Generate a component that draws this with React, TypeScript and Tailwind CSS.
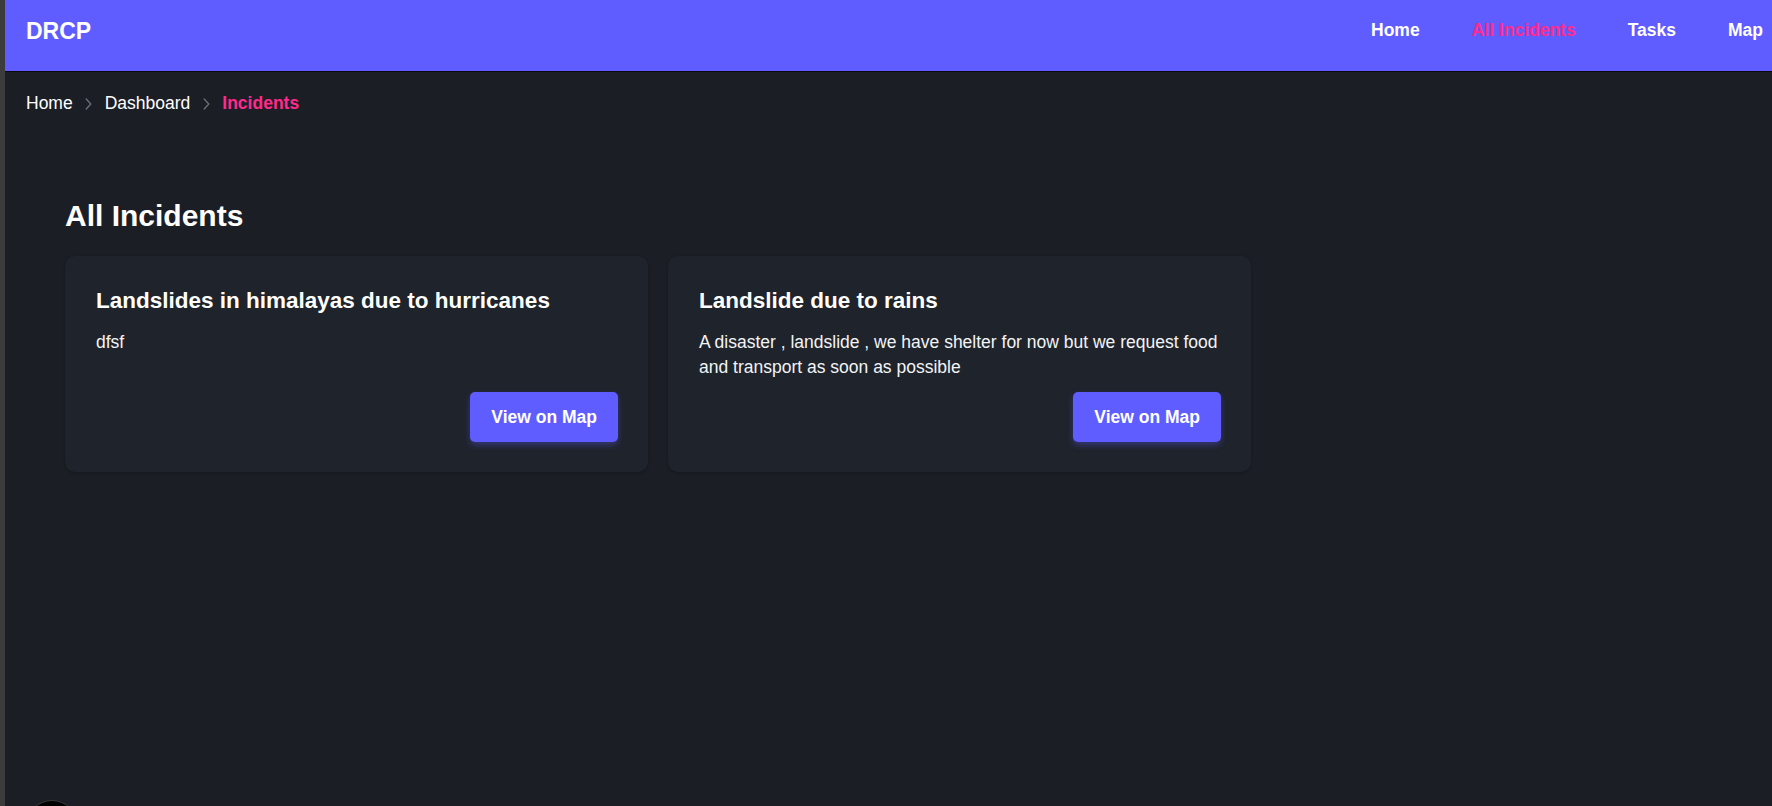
const incidents = [
  {
    id: 1,
    title: 'Landslides in himalayas due to hurricanes',
    description: 'dfsf',
  },
  {
    id: 2,
    title: 'Landslide due to rains',
    description:
      'A disaster , landslide , we have shelter for now but we request food and transport as soon as possible',
  },
];

const navLinks = [
  { label: 'Home', active: false },
  { label: 'All Incidents', active: true },
  { label: 'Tasks', active: false },
  { label: 'Map', active: false },
];

function Chevron() {
  return (
    <svg width="7" height="12" viewBox="0 0 7 12" fill="none" className="mx-[12.5px] shrink-0">
      <path d="M1.2 1 L5.8 6 L1.2 11" stroke="#6b7079" strokeWidth="1.3" strokeLinecap="round" strokeLinejoin="round" />
    </svg>
  );
}

function Header() {
  return (
    <header className="flex h-[72px] items-center justify-between border-b border-[#0b0b12] bg-[#5f5dff] pb-[9px] pl-[21px] pr-[9px]">
      <span className="text-[23px] font-bold leading-none text-white">DRCP</span>
      <nav className="flex items-center gap-[52px] text-[17.5px] font-bold leading-none">
        {navLinks.map((link) => (
          <a key={link.label} className={link.active ? 'text-[#ff2a8c]' : 'text-white'}>
            {link.label}
          </a>
        ))}
      </nav>
    </header>
  );
}

function IncidentCard({ title, description }: { title: string; description: string }) {
  return (
    <article className="flex flex-col rounded-[10px] bg-[#1f232b] pb-[30px] pl-[31px] pr-[30px] pt-[31px] shadow-[0_1px_3px_rgba(0,0,0,0.25)]">
      <h3 className="text-[22.5px] font-bold leading-[28px] text-white">{title}</h3>
      <p className="mt-[15px] text-[17.5px] leading-[25px] text-[#f3f4f6]">{description}</p>
      <div className="mt-auto flex justify-end pt-[12px]">
        <button className="h-[50px] rounded-[5px] bg-[#5f5dff] px-[21px] text-[17.5px] font-bold text-white shadow-[0_3px_6px_rgba(95,93,255,0.35)]">
          View on Map
        </button>
      </div>
    </article>
  );
}

export default function App() {
  return (
    <div className="flex min-h-screen bg-[#1b1e25] font-['Liberation_Sans',Arial,sans-serif]">
      <div className="w-[5px] shrink-0 bg-[#3c3c3c]" />
      <div className="flex min-w-0 flex-1 flex-col">
        <Header />
        <nav className="flex items-center pl-[21px] pt-[19px] text-[17.5px] leading-[25px]">
          <a className="text-white">Home</a>
          <Chevron />
          <a className="text-white">Dashboard</a>
          <Chevron />
          <span className="font-bold text-[#ff2a8c]">Incidents</span>
        </nav>
        <main className="pl-[60px] pt-[82px]">
          <h2 className="mb-[22px] text-[30px] font-bold leading-[36px] text-white">All Incidents</h2>
          <div className="grid grid-cols-[repeat(2,583px)] gap-[20px]">
            {incidents.map((incident) => (
              <IncidentCard key={incident.id} title={incident.title} description={incident.description} />
            ))}
          </div>
        </main>
      </div>
      <div className="fixed bottom-[-46px] left-[26px] size-[52px] rounded-full border border-[#3a3a3a] bg-black" />
    </div>
  );
}
